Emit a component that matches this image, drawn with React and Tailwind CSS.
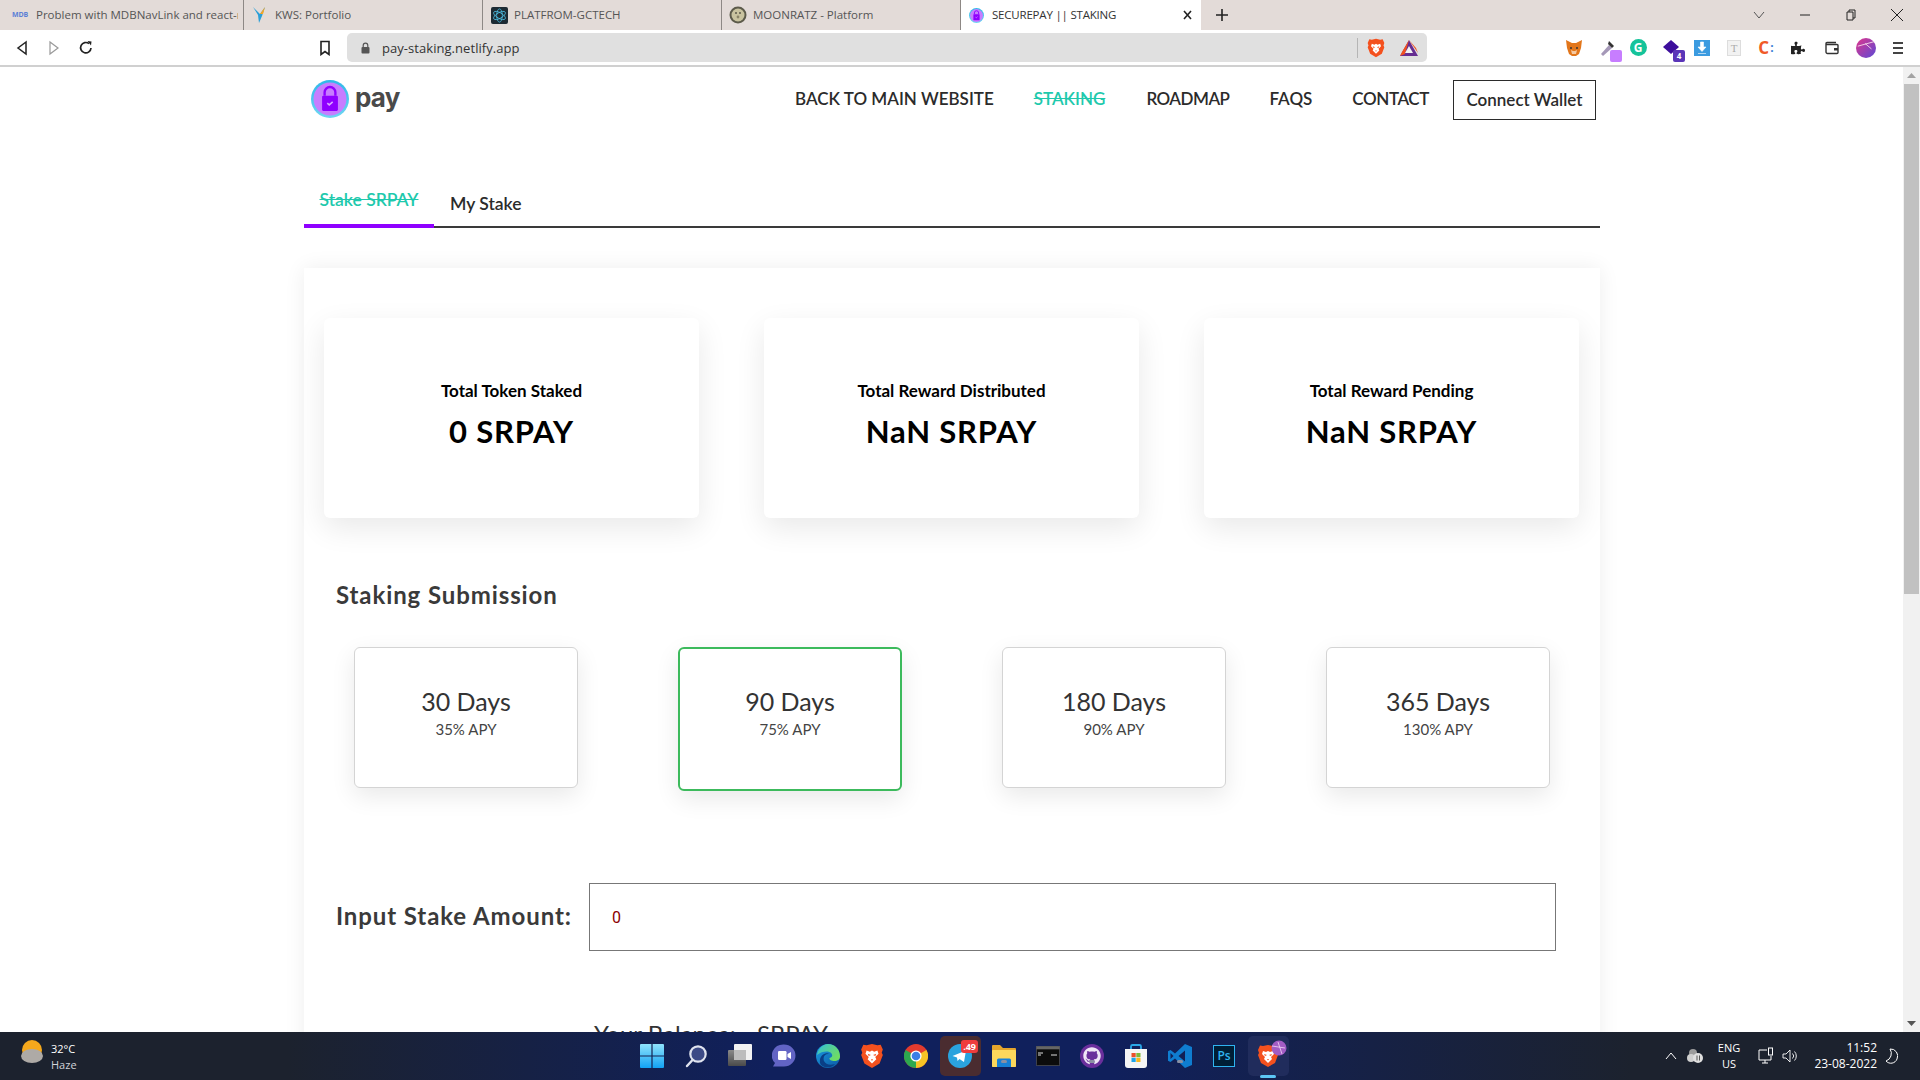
import React from "react";
import { FaGithub, FaPuzzlePiece } from "react-icons/fa";

const Brave = ({ s = 20 }) => (
  <svg width={s} height={s} viewBox="0 0 24 24">
    <path d="M12 1 L17 2 L20 1.5 L22 6 L21 9 L22 11 L19 19 L12 23 L5 19 L2 11 L3 9 L2 6 L4 1.5 L7 2 Z" fill="#f4511e" />
    <path d="M7 7 L10 8 L12 7 L14 8 L17 7 L18 10 L15 13 L16 15 L12 19 L8 15 L9 13 L6 10 Z" fill="#fff" />
    <path d="M8 10 L11 11 L9 12 Z M16 10 L13 11 L15 12 Z M11 15 L13 15 L12 16.5 Z" fill="#f4511e" />
  </svg>
);

const Lock = ({ s = 16 }) => (
  <svg width={s} height={s} viewBox="0 0 24 24">
    <defs>
      <linearGradient id="ring" x1="0" y1="0" x2="0" y2="1">
        <stop offset="0" stopColor="#2fb7e8" />
        <stop offset="1" stopColor="#6fd6f2" />
      </linearGradient>
    </defs>
    <circle cx="12" cy="12" r="12" fill="url(#ring)" />
    <circle cx="12" cy="12" r="10.4" fill="#c77dff" />
    <path d="M8.6 10 V7.8 a3.4 3.4 0 0 1 6.8 0 V10" fill="none" stroke="#8f00ff" strokeWidth="1.5" />
    <rect x="7" y="10" width="10" height="9.5" rx="0.8" fill="#8f00ff" />
    <path d="M10.3 14.6 l1.2 1.1 l2.2 -1.9" fill="none" stroke="#d9a6ff" strokeWidth="1" />
  </svg>
);

const Tab = ({ icon, text, first }) => (
  <div className={first
    ? "w-[244px] h-[30px] shrink-0 flex items-center pl-[10px] border-r border-[#8d8885]"
    : "w-[239px] h-[30px] shrink-0 flex items-center pl-[6px] border-r border-[#8d8885]"}>
    <span className="w-[20px] h-[20px] flex items-center justify-center shrink-0">{icon}</span>
    <span className={first
      ? "ml-[6px] w-[202px] text-[11.5px] text-[#555] whitespace-nowrap overflow-hidden"
      : "ml-[5px] w-[200px] text-[11.5px] text-[#555] whitespace-nowrap overflow-hidden"}>{text}</span>
  </div>
);

const Ext = ({ ml, children }) => (
  <span className="flex items-center justify-center shrink-0 relative w-[20px] h-[22px]" style={{ marginLeft: ml }}>{children}</span>
);

const Stat = ({ title, value }) => (
  <div className="h-[200px] bg-white rounded-[6px] shadow-[0_10px_30px_rgba(0,0,0,0.09)] flex flex-col items-center pt-[61px]">
    <div className="text-[17px] leading-[24px] font-bold text-black">{title}</div>
    <div className="mt-[7px] text-[31px] leading-[42px] font-bold text-black tracking-[0.8px]">{value}</div>
  </div>
);

const Day = ({ d, a, on }) => (
  <div className={on
    ? "w-[224px] h-[144px] bg-white rounded-[6px] border-2 border-[#3cba5c] shadow-[0_8px_24px_rgba(0,0,0,0.09)] flex flex-col items-center pt-[36px]"
    : "w-[224px] h-[141px] bg-white rounded-[6px] border border-[#d4d4d4] shadow-[0_8px_24px_rgba(0,0,0,0.09)] flex flex-col items-center pt-[37px]"}>
    <div className="text-[25px] leading-[32px] text-[#333]">{d}</div>
    <div className="text-[15px] leading-[20px] mt-[2px] text-[#444]">{a}</div>
  </div>
);

const Task = ({ children, tile }) => (
  <div className="w-[44px] h-[48px] flex items-center justify-center relative shrink-0">
    {tile && <span className={"absolute left-[2px] right-[1px] top-[4px] bottom-[4px] rounded-[5px] " + tile}></span>}
    <span className="relative flex">{children}</span>
  </div>
);

const Dot = ({ c = "bg-[#8a90a3]" }) => (
  <span className={"absolute bottom-[5px] left-1/2 -translate-x-1/2 w-[6px] h-[3px] rounded-full " + c}></span>
);

export default function App() {
  return (
    <div className="w-[1920px] h-[1080px] overflow-hidden flex flex-col bg-white font-['Lato',sans-serif]">
      {/* tab strip */}
      <div className="h-[30px] bg-[#e3dbd8] flex items-center shrink-0 font-['Open_Sans',sans-serif]">
        <Tab first text="Problem with MDBNavLink and react-r" icon={<span className="text-[7px] font-bold text-[#5b7fd6] tracking-tight">MDB</span>} />
        <Tab text="KWS: Portfolio" icon={
          <svg width="18" height="20" viewBox="0 0 18 20"><path d="M2 2 L9 9 L14 2 L11 11 L8 18 L7 10 Z" fill="#2a9fd8" /><path d="M9 9 L14 2 L12 9 Z" fill="#f5a623" /></svg>
        } />
        <Tab text="PLATFROM-GCTECH" icon={
          <svg width="17" height="17" viewBox="0 0 18 18"><rect width="18" height="18" rx="2" fill="#1d2a33" /><g fill="none" stroke="#4fc3e8" strokeWidth="0.8"><ellipse cx="9" cy="9" rx="3" ry="7" /><ellipse cx="9" cy="9" rx="3" ry="7" transform="rotate(60 9 9)" /><ellipse cx="9" cy="9" rx="3" ry="7" transform="rotate(120 9 9)" /></g></svg>
        } />
        <Tab text="MOONRATZ - Platform" icon={
          <svg width="18" height="18" viewBox="0 0 18 18"><circle cx="9" cy="9" r="8.5" fill="#5c5a4a" /><circle cx="9" cy="9" r="6.5" fill="#c9c39f" /><circle cx="7" cy="7" r="1" fill="#5c5a4a" /><circle cx="11" cy="7" r="1" fill="#5c5a4a" /><circle cx="9" cy="11" r="1.4" fill="#8a8468" /></svg>
        } />
        <div className="w-[240px] h-[30px] bg-white shrink-0 flex items-center pl-[8px] relative">
          <Lock s={15} />
          <span className="ml-[8px] text-[11.5px] tracking-[-0.2px] text-[#333] whitespace-nowrap">SECUREPAY || STAKING</span>
          <span className="absolute right-[7px] top-[6px] w-[13px] h-[18px]">
            <svg width="13" height="18" viewBox="0 0 13 18"><path d="M3 5 L10 13 M10 5 L3 13" stroke="#222" strokeWidth="1.6" /></svg>
          </span>
        </div>
        <span className="ml-[14px] w-[14px] h-[14px] flex">
          <svg width="14" height="14" viewBox="0 0 14 14"><path d="M7 1 V13 M1 7 H13" stroke="#222" strokeWidth="1.6" /></svg>
        </span>
        <div className="ml-auto flex items-center text-[#333]">
          <svg width="12" height="12" viewBox="0 0 12 12" className="mr-[34px]"><path d="M1 3 L6 9 L11 3" fill="none" stroke="#555" strokeWidth="1" /></svg>
          <svg width="12" height="12" viewBox="0 0 12 12" className="mr-[34px]"><path d="M1 6 H11" stroke="#222" strokeWidth="1" /></svg>
          <svg width="12" height="12" viewBox="0 0 12 12" className="mr-[33px]"><path d="M2 3 H8 V11 H2 Z M4 3 V1 H10 V9 H8" fill="none" stroke="#222" strokeWidth="1" /></svg>
          <svg width="14" height="14" viewBox="0 0 14 14" className="mr-[16px]"><path d="M1 1 L13 13 M13 1 L1 13" stroke="#222" strokeWidth="1" /></svg>
        </div>
      </div>

      {/* address bar */}
      <div className="h-[37px] bg-white border-b-2 border-[#d0d0d0] flex items-center shrink-0 font-['Open_Sans',sans-serif]">
        <span className="ml-[16px] flex w-[12px]"><svg width="12" height="16" viewBox="0 0 12 16"><path d="M10 2 L2 8 L10 14 Z" fill="none" stroke="#222" strokeWidth="1.5" /></svg></span>
        <span className="ml-[20px] flex w-[12px]"><svg width="12" height="16" viewBox="0 0 12 16"><path d="M2 2 L10 8 L2 14 Z" fill="none" stroke="#999" strokeWidth="1.2" /></svg></span>
        <span className="ml-[18px] flex w-[16px]"><svg width="16" height="16" viewBox="0 0 16 16"><path d="M13 8 A5.2 5.2 0 1 1 11 3.6" fill="none" stroke="#222" strokeWidth="1.7" /><path d="M9.5 1 L13.5 1.5 L13 5.5 Z" fill="#222" /></svg></span>
        <span className="ml-[225px] flex w-[12px]"><svg width="12" height="16" viewBox="0 0 12 16"><path d="M2 1.5 H10 V14.5 L6 11.5 L2 14.5 Z" fill="none" stroke="#222" strokeWidth="1.6" /></svg></span>
        <div className="ml-[16px] w-[1080px] h-[29px] bg-[#e0e0e0] rounded-[5px] flex items-center pl-[14px]">
          <svg width="9" height="12" viewBox="0 0 9 12"><rect x="0.5" y="5" width="8" height="6.5" rx="1" fill="#555" /><path d="M2.2 5 V3.4 a2.3 2.3 0 0 1 4.6 0 V5" fill="none" stroke="#555" strokeWidth="1.2" /></svg>
          <span className="ml-[12px] pt-[2px] text-[13px] tracking-[0.05px] text-[#333]">pay-staking.netlify.app</span>
          <span className="ml-auto w-px h-[20px] bg-[#b5b5b5]"></span>
          <span className="ml-[8px] flex"><Brave s={20} /></span>
          <span className="ml-[13px] mr-[8px] flex">
            <svg width="20" height="20" viewBox="0 0 20 20"><path d="M10 2 L19 18 H1 Z" fill="#662d91" /><path d="M10 2 L19 15 L17 10 L10 2 L3 14 L1 18 L6 16 Z" fill="#f1511f" /><path d="M10 8 L14 15 H6 Z" fill="#f2f2f2" /></svg>
          </span>
        </div>
        <div className="ml-[137px] flex items-center">
          <Ext ml={0}>
            <svg width="18" height="18" viewBox="0 0 18 18"><path d="M1 1 L7 4 H11 L17 1 L16 9 L14 15 L11 17 H7 L4 15 L2 9 Z" fill="#e2761b" /><path d="M6 11 L8 12 H10 L12 11 L11 15 H7 Z" fill="#f6c9a0" /><circle cx="6" cy="9" r="1" fill="#333" /><circle cx="12" cy="9" r="1" fill="#333" /></svg>
          </Ext>
          <Ext ml={14}>
            <svg width="20" height="20" viewBox="0 0 20 20"><path d="M3 16 L11 7 L14 10 L5 18 Z" fill="#a598b8" /><path d="M11 3 L16 8 L14 10 L10 6 Z" fill="#333" /></svg>
            <span className="absolute right-[-4px] bottom-[-3px] w-[12px] h-[12px] rounded-[2px] bg-[#c77dff]"></span>
          </Ext>
          <Ext ml={10}><span className="w-[17px] h-[17px] rounded-full bg-[#15c39a] flex items-center justify-center text-white text-[12px] font-bold leading-none">G</span></Ext>
          <Ext ml={13}>
            <svg width="18" height="18" viewBox="0 0 18 18"><path d="M9 1 L17 8 L9 15 L1 8 Z" fill="#3d0e9c" /></svg>
            <span className="absolute right-[-4px] bottom-[-3px] w-[12px] h-[12px] rounded-[2px] bg-[#5a35b8] text-white text-[8px] font-bold text-center leading-[12px]">4</span>
          </Ext>
          <Ext ml={11}><span className="w-[16px] h-[16px] bg-[#3b9be0] flex items-center justify-center">
            <svg width="10" height="14" viewBox="0 0 10 14"><path d="M3.5 1 H6.5 V6 H9 L5 10.5 L1 6 H3.5 Z M1 12.5 H9" fill="#fff" stroke="#fff" strokeWidth="0.6" /></svg>
          </span></Ext>
          <Ext ml={12}><span className="w-[14px] h-[16px] bg-[#f2f2f2] border border-[#ddd] text-[#aaa] text-[11px] text-center leading-[14px] font-['Liberation_Serif',serif]">T</span></Ext>
          <Ext ml={12}><span className="text-[#f05a28] text-[17px] font-bold leading-none flex items-center">C<span className="text-[#3b7fd6] text-[12px] ml-[1px]">:</span></span></Ext>
          <Ext ml={12}><FaPuzzlePiece size={14} color="#222" /></Ext>
          <Ext ml={14}>
            <svg width="16" height="14" viewBox="0 0 16 14"><path d="M2 3 V11 a1.5 1.5 0 0 0 1.5 1.5 H13 a1 1 0 0 0 1 -1 V4.5 a1 1 0 0 0 -1 -1 H3 a1 1 0 0 1 0 -2 H12" fill="none" stroke="#333" strokeWidth="1.4" /><rect x="10" y="7" width="4" height="2.5" fill="#333" /></svg>
          </Ext>
          <Ext ml={14}>
            <svg width="22" height="22" viewBox="0 0 22 22"><defs><linearGradient id="av" x1="0" y1="0" x2="1" y2="1"><stop offset="0" stopColor="#e0368c" /><stop offset="1" stopColor="#5b4ad6" /></linearGradient></defs><circle cx="11" cy="11" r="11" fill="url(#av)" /><path d="M2 9 L20 4 M10 6 L17 12" stroke="#f7d9ea" strokeWidth="1" /></svg>
          </Ext>
          <Ext ml={12}>
            <span className="flex flex-col gap-[3px]">
              <span className="w-[10px] h-[2px] bg-[#444]"></span>
              <span className="w-[10px] h-[2px] bg-[#444]"></span>
              <span className="w-[10px] h-[2px] bg-[#444]"></span>
            </span>
          </Ext>
        </div>
      </div>

      {/* viewport */}
      <div className="flex-1 min-h-0 flex overflow-hidden">
        <div className="w-[1903px] shrink-0 overflow-hidden">
          <div className="w-[1296px] ml-[304px]">
            <nav className="h-[63px] pt-[13px] flex items-start relative">
              <div className="ml-[7px] flex items-center">
                <Lock s={38} />
                <span className="ml-[6px] -mt-[2px] text-[26px] leading-[38px] font-bold text-[#4a4a4a] font-['Inter',sans-serif] tracking-[-0.8px]">pay</span>
              </div>
              <div className="ml-auto mr-[4px] flex items-start text-[17px] leading-[37px] font-semibold text-[#2b2b2b]">
                <a className="mr-[40px]">BACK TO MAIN WEBSITE</a>
                <a className="mr-[41px] text-[#1fc9ad] line-through">STAKING</a>
                <a className="mr-[40px] tracking-[-0.5px]">ROADMAP</a>
                <a className="mr-[40px]">FAQS</a>
                <a className="mr-[24px] tracking-[-0.4px]">CONTACT</a>
                <button className="w-[143px] h-[40px] pb-[4px] border border-[#2b2b2b] text-[17px] font-semibold text-[#2b2b2b]">Connect Wallet</button>
              </div>
            </nav>

            <div className="h-[98px] flex items-end border-b-2 border-[#3a3a3a]">
              <div className="w-[130px] h-[58px] -mb-[2px] border-b-4 border-[#8f00ff] flex justify-center pt-[18px] text-[17.5px] leading-[24px] font-semibold text-[#1fc9ad] line-through">Stake SRPAY</div>
              <div className="ml-[16px] h-[56px] pt-[22px] text-[17.5px] leading-[24px] font-semibold text-[#2b2b2b]">My Stake</div>
            </div>

            <section className="mt-[40px] h-[800px] bg-white shadow-[0_0_20px_rgba(0,0,0,0.07)] pt-[50px] pl-[20px] pr-[21px]">
              <div className="grid grid-cols-3 gap-[65px]">
                <Stat title="Total Token Staked" value="0 SRPAY" />
                <Stat title="Total Reward Distributed" value="NaN SRPAY" />
                <Stat title="Total Reward Pending" value="NaN SRPAY" />
              </div>
              <h2 className="mt-[60px] ml-[12px] text-[24px] leading-[34px] font-bold text-[#3a3a3a] tracking-[0.9px]">Staking Submission</h2>
              <div className="mt-[35px] ml-[30px] flex items-start gap-[100px]">
                <Day d="30 Days" a="35% APY" />
                <Day d="90 Days" a="75% APY" on />
                <Day d="180 Days" a="90% APY" />
                <Day d="365 Days" a="130% APY" />
              </div>
              <div className="mt-[92px] ml-[12px] flex items-center">
                <label className="w-[253px] -mt-[2px] text-[24px] font-bold text-[#3a3a3a] tracking-[0.9px] whitespace-nowrap">Input Stake Amount:</label>
                <div className="w-[967px] h-[68px] border border-[#777] pl-[22px] pt-[2px] flex items-center text-[16px] text-[#8b0000] font-['Roboto',sans-serif]">0</div>
              </div>
              <div className="mt-[67px] ml-[270px] text-[24px] leading-[32px] text-[#333]">Your Balance: - SRPAY</div>
            </section>
          </div>
        </div>
        {/* scrollbar */}
        <div className="w-[17px] bg-[#f1f1f1] flex flex-col items-center shrink-0 relative">
          <svg width="9" height="6" viewBox="0 0 9 6" className="mt-[6px]"><path d="M4.5 0 L9 5 H0 Z" fill="#a3a3a3" /></svg>
          <div className="mt-[5px] w-[15px] h-[510px] bg-[#c1c1c1]"></div>
          <svg width="9" height="6" viewBox="0 0 9 6" className="absolute bottom-[6px]"><path d="M4.5 6 L9 1 H0 Z" fill="#555" /></svg>
        </div>
      </div>

      {/* taskbar */}
      <div className="h-[48px] shrink-0 relative flex items-center justify-center text-white font-['Open_Sans',sans-serif] bg-[linear-gradient(90deg,#1c222e_0%,#1c222e_15%,#10205c_40%,#10205c_58%,#1c222e_85%,#1c222e_100%)]">
        <div className="absolute left-[20px] top-[6px] flex items-start">
          <svg width="24" height="28" viewBox="0 0 24 28"><circle cx="12" cy="12" r="10" fill="#f5a81c" /><ellipse cx="12" cy="18" rx="11" ry="7" fill="#aeaaa6" /></svg>
          <div className="ml-[7px] mt-[3px] text-[11px] leading-[16px]"><div>32°C</div><div className="text-[#cfd2d8]">Haze</div></div>
        </div>

        <div className="flex items-center">
          <Task>
            <svg width="24" height="24" viewBox="0 0 24 24"><defs><linearGradient id="win" x1="0" y1="0" x2="0" y2="1"><stop offset="0" stopColor="#8fe3fb" /><stop offset="1" stopColor="#12a2f4" /></linearGradient></defs><path d="M0 1 a1 1 0 0 1 1 -1 H11.4 V11.4 H0 Z M12.6 0 H23 a1 1 0 0 1 1 1 V11.4 H12.6 Z M0 12.6 H11.4 V24 H1 a1 1 0 0 1 -1 -1 Z M12.6 12.6 H24 V23 a1 1 0 0 1 -1 1 H12.6 Z" fill="url(#win)" /></svg>
          </Task>
          <Task><svg width="24" height="24" viewBox="0 0 24 24"><circle cx="14" cy="10" r="7.7" fill="#3c4a86" stroke="#dfe3ee" strokeWidth="2.2" /><path d="M8.5 16 L3 22" stroke="#dfe3ee" strokeWidth="2.4" strokeLinecap="round" /></svg></Task>
          <Task><svg width="24" height="24" viewBox="0 0 24 24"><defs><linearGradient id="tv" x1="0" y1="0" x2="0" y2="1"><stop offset="0" stopColor="#8a8a8a" /><stop offset="1" stopColor="#4a4a4a" /></linearGradient></defs><rect x="0" y="6" width="18" height="16" rx="1" fill="url(#tv)" /><rect x="6" y="0" width="18" height="16" rx="1" fill="#f2f2f2" /><rect x="6" y="6" width="12" height="10" fill="#bdbdbd" /></svg></Task>
          <Task><svg width="24" height="24" viewBox="0 0 24 24"><path d="M12 0.5 a11.5 11 0 0 1 0 22 H1 L3 19 A11.5 11 0 0 1 12 0.5 Z" fill="#6264c4" /><rect x="6" y="7" width="8.5" height="9" rx="1.2" fill="#fff" /><path d="M15.5 10 L19 8 V15 L15.5 13 Z" fill="#fff" /></svg></Task>
          <Task><svg width="24" height="24" viewBox="0 0 24 24"><defs><linearGradient id="ed1" x1="0" y1="0" x2="1" y2="1"><stop offset="0" stopColor="#1b9de2" /><stop offset="1" stopColor="#0c59a4" /></linearGradient><linearGradient id="ed2" x1="0" y1="0" x2="1" y2="0.6"><stop offset="0" stopColor="#33bfd8" /><stop offset="1" stopColor="#6fdc62" /></linearGradient></defs><circle cx="12" cy="12" r="12" fill="url(#ed1)" /><path d="M12 0 C19 0 24 5.5 24 12.5 C24 15.5 21.5 17 18.5 17 C15.5 17 13 16 13.5 14 C16 13.5 17 11.5 15.5 9.5 C13 6.5 6 7 1 11 C2 5 6.5 0 12 0 Z" fill="url(#ed2)" /><path d="M13 10 C9 9.5 6.5 13 8 17 C9.5 20.5 14 21.5 19 20 C16 24 9 24.5 5 21 C3 18 3.5 12 8 10 C10 9 12 9 13 10 Z" fill="#0a3f86" /></svg></Task>
          <Task><Brave s={26} /></Task>
          <Task><svg width="24" height="24" viewBox="0 0 24 24"><circle cx="12" cy="12" r="12" fill="#e33b2e" /><path d="M12 12 L22.4 6 A12 12 0 0 1 12 24 Z" fill="#f7c325" /><path d="M12 12 L12 24 A12 12 0 0 1 1.6 6 Z" fill="#2da94f" /><circle cx="12" cy="12" r="5.6" fill="#fff" /><circle cx="12" cy="12" r="4.3" fill="#3b7fe6" /></svg></Task>
          <Task tile="bg-[#4a2c30]">
            <svg width="24" height="24" viewBox="0 0 24 24"><circle cx="12" cy="12" r="12" fill="#2aa3de" /><path d="M4.5 12 L18 6.5 L16 18 L11.5 15 L9.5 17 L9 13.5 Z" fill="#fff" /></svg>
            <span className="absolute right-[-6px] top-[-4px] h-[13px] px-[2px] bg-[#ef3d3d] rounded-[3px] text-[9px] leading-[13px] font-bold">.49</span>
          </Task>
          <Task>
            <svg width="24" height="24" viewBox="0 0 24 24"><path d="M0 2 a1 1 0 0 1 1 -1 H8 L11 4 H23 a1 1 0 0 1 1 1 V22 a1 1 0 0 1 -1 1 H1 a1 1 0 0 1 -1 -1 Z" fill="#e5a52c" /><rect x="0" y="6" width="24" height="17" rx="1" fill="#fbd75c" /><path d="M5 16 a1.5 1.5 0 0 1 1.5 -1.5 H17.5 a1.5 1.5 0 0 1 1.5 1.5 V23 H5 Z" fill="#1780d6" /></svg>
            <Dot />
          </Task>
          <Task><svg width="24" height="20" viewBox="0 0 24 20"><rect x="0.3" y="0.3" width="23.4" height="19.4" rx="1" fill="#0c0c0c" stroke="#777" strokeWidth="0.6" /><rect x="0.3" y="0.3" width="23.4" height="3" fill="#666" /><path d="M2 7 H7 M2 9 H5 M15 9 H21" stroke="#ddd" strokeWidth="1" /></svg></Task>
          <Task>
            <span className="w-[24px] h-[24px] rounded-full bg-[#6a2f9c] flex items-center justify-center"><FaGithub size={18} color="#efe6f6" /></span>
            <Dot />
          </Task>
          <Task><svg width="24" height="26" viewBox="0 0 24 26"><path d="M7 7 V3.5 a1.5 1.5 0 0 1 1.5 -1.5 H15.5 a1.5 1.5 0 0 1 1.5 1.5 V7" fill="none" stroke="#2aa8e8" strokeWidth="1.8" /><path d="M1 6 H23 L23 22 a3 3 0 0 1 -3 3 H4 A3 3 0 0 1 1 22 Z" fill="#f5f5f5" /><rect x="7.5" y="10" width="4.2" height="4.2" fill="#ea4f2b" /><rect x="12.3" y="10" width="4.2" height="4.2" fill="#7eb83a" /><rect x="7.5" y="14.8" width="4.2" height="4.2" fill="#1fa4e8" /><rect x="12.3" y="14.8" width="4.2" height="4.2" fill="#f7b71d" /></svg></Task>
          <Task>
            <svg width="24" height="24" viewBox="0 0 24 24"><path d="M17 0 L24 3 V21 L17 24 L7 14.5 L2.5 18 L0 16.8 V7.2 L2.5 6 L7 9.5 Z M17 6.5 L10.5 12 L17 17.5 Z M2.5 9 V15 L5.5 12 Z" fill="#0f7dd0" fillRule="evenodd" /></svg>
            <Dot />
          </Task>
          <Task><span className="w-[22px] h-[22px] bg-[#001e36] border border-[#2fb4f0] text-[#2fb4f0] text-[12px] font-semibold flex items-center justify-center leading-none">Ps</span></Task>
          <Task tile="bg-[#202c5c]">
            <Brave s={24} />
            <svg width="18" height="18" viewBox="0 0 18 18" className="absolute right-[-8px] top-[-5px]"><circle cx="9" cy="9" r="7.5" fill="#a25cc4" /><path d="M2 7 L15 9 M8 3 L12 15" stroke="#e9c9ef" strokeWidth="0.9" /></svg>
            <span className="absolute bottom-[-10px] left-1/2 -translate-x-1/2 w-[16px] h-[3px] rounded-full bg-[#5cc6f5]"></span>
          </Task>
        </div>

        <div className="absolute right-0 top-0 h-[48px] flex items-center">
          <svg width="12" height="8" viewBox="0 0 12 8"><path d="M1 7 L6 1 L11 7" fill="none" stroke="#fff" strokeWidth="1" /></svg>
          <span className="ml-[9px] flex"><svg width="18" height="16" viewBox="0 0 18 16"><circle cx="7" cy="5" r="4" fill="#9c9c9c" /><circle cx="5" cy="10" r="4" fill="#cfcfcf" /><circle cx="12" cy="10" r="5" fill="#e0e0e0" /><path d="M11 7.5 V12.5 M13.5 7.5 V12.5" stroke="#555" strokeWidth="1" /></svg></span>
          <div className="ml-[9px] w-[32px] text-center text-[11px] leading-[16px]"><div>ENG</div><div>US</div></div>
          <span className="ml-[13px] flex"><svg width="16" height="18" viewBox="0 0 16 18"><path d="M1 3 H9 M1 3 V13 H13 V9 M7 13 V16 M4 16 H10" fill="none" stroke="#fff" strokeWidth="1" /><rect x="10.5" y="1" width="4" height="7" fill="none" stroke="#fff" strokeWidth="1" /></svg></span>
          <span className="ml-[8px] flex"><svg width="17" height="16" viewBox="0 0 17 16"><path d="M1 6 H4 L8 2 V14 L4 10 H1 Z M10.5 5.5 a3.5 3.5 0 0 1 0 5 M12.5 3.5 a6.5 6.5 0 0 1 0 9" fill="none" stroke="#fff" strokeWidth="0.9" /></svg></span>
          <div className="ml-[14px] w-[64px] text-right text-[12px] leading-[16px] whitespace-nowrap"><div>11:52</div><div>23-08-2022</div></div>
          <span className="ml-[7px] mr-[22px] flex"><svg width="14" height="16" viewBox="0 0 14 16"><path d="M6 1 A7 7 0 0 1 13 11 A6.5 6.5 0 0 1 2 13 A8 8 0 0 0 6 1 Z" fill="none" stroke="#fff" strokeWidth="1" /></svg></span>
        </div>
      </div>
    </div>
  );
}
